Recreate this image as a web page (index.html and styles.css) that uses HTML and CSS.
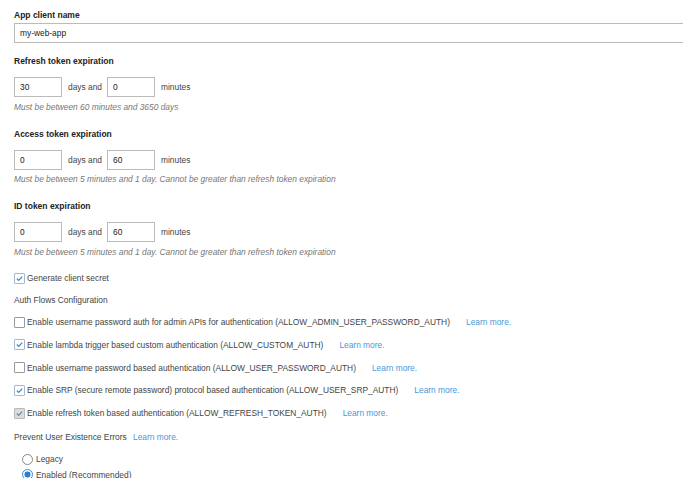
FILE: index.html
```html
<!DOCTYPE html>
<html>
<head>
<meta charset="utf-8">
<link rel="stylesheet" href="styles.css">
</head>
<body>
<form class="client-form">
  <section class="field name-field">
    <label class="field-label">App client name</label>
    <div class="text-input wide">my-web-app</div>
  </section>

  <section class="field">
    <label class="field-label">Refresh token expiration</label>
    <div class="duration">
      <div class="text-input short">30</div>
      <span class="unit">days and</span>
      <div class="text-input short">0</div>
      <span class="unit">minutes</span>
    </div>
    <p class="hint">Must be between 60 minutes and 3650 days</p>
  </section>

  <section class="field">
    <label class="field-label">Access token expiration</label>
    <div class="duration">
      <div class="text-input short">0</div>
      <span class="unit">days and</span>
      <div class="text-input short">60</div>
      <span class="unit">minutes</span>
    </div>
    <p class="hint">Must be between 5 minutes and 1 day. Cannot be greater than refresh token expiration</p>
  </section>

  <section class="field">
    <label class="field-label">ID token expiration</label>
    <div class="duration">
      <div class="text-input short">0</div>
      <span class="unit">days and</span>
      <div class="text-input short">60</div>
      <span class="unit">minutes</span>
    </div>
    <p class="hint">Must be between 5 minutes and 1 day. Cannot be greater than refresh token expiration</p>
  </section>

  <div class="check-row secret">
    <span class="box checked"><svg viewBox="0 0 11 11"><path d="M2.3 5.6 L4.5 7.8 L8.8 3.2"/></svg></span>
    <span>Generate client secret</span>
  </div>

  <div class="plain-label">Auth Flows Configuration</div>

  <div class="flows">
    <div class="check-row">
      <span class="box"></span>
      <span>Enable username password auth for admin APIs for authentication (ALLOW_ADMIN_USER_PASSWORD_AUTH)</span>
      <a class="learn">Learn more.</a>
    </div>
    <div class="check-row">
      <span class="box checked"><svg viewBox="0 0 11 11"><path d="M2.3 5.6 L4.5 7.8 L8.8 3.2"/></svg></span>
      <span>Enable lambda trigger based custom authentication (ALLOW_CUSTOM_AUTH)</span>
      <a class="learn">Learn more.</a>
    </div>
    <div class="check-row">
      <span class="box"></span>
      <span>Enable username password based authentication (ALLOW_USER_PASSWORD_AUTH)</span>
      <a class="learn">Learn more.</a>
    </div>
    <div class="check-row">
      <span class="box checked"><svg viewBox="0 0 11 11"><path d="M2.3 5.6 L4.5 7.8 L8.8 3.2"/></svg></span>
      <span>Enable SRP (secure remote password) protocol based authentication (ALLOW_USER_SRP_AUTH)</span>
      <a class="learn">Learn more.</a>
    </div>
    <div class="check-row">
      <span class="box checked locked"><svg viewBox="0 0 11 11"><path d="M2.3 5.6 L4.5 7.8 L8.8 3.2"/></svg></span>
      <span>Enable refresh token based authentication (ALLOW_REFRESH_TOKEN_AUTH)</span>
      <a class="learn">Learn more.</a>
    </div>
  </div>

  <div class="plain-label existence">Prevent User Existence Errors <a class="learn near">Learn more.</a></div>

  <div class="radios">
    <div class="radio-row"><span class="radio"></span><span>Legacy</span></div>
    <div class="radio-row"><span class="radio on"></span><span>Enabled (Recommended)</span></div>
  </div>
</form>
</body>
</html>
```

FILE: styles.css
```css
html, body {
  margin: 0;
  padding: 0;
  background: #fff;
}

body {
  font-family: "Liberation Sans", Arial, sans-serif;
  font-size: 8.4px;
  color: #444;
  overflow: hidden;
}

.client-form {
  padding: 10px 0 0 14px;
}

.field {
  margin-bottom: 16px;
}

.name-field {
  margin-bottom: 13px;
}

.field-label {
  display: block;
  font-weight: bold;
  color: #222;
  font-size: 8.5px;
  line-height: 11px;
  height: 11px;
  margin-bottom: 2px;
}

.text-input {
  box-sizing: border-box;
  height: 20px;
  border: 1px solid #bbb;
  padding: 0 0 0 5px;
  line-height: 18px;
  color: #222;
  background: #fff;
}

.text-input.wide {
  width: 700px;
}

.text-input.short {
  width: 48px;
}

.duration {
  display: flex;
  align-items: center;
  margin-top: 10px;
}

.unit {
  padding: 0 5px 0 6px;
  color: #444;
}

.hint {
  margin: 4.5px 0 0 0;
  font-style: italic;
  color: #777;
  line-height: 11px;
  height: 11px;
}

.check-row {
  display: flex;
  align-items: center;
  height: 11px;
  gap: 2px;
  white-space: nowrap;
}

.check-row.secret {
  margin-top: -1px;
}

.box {
  box-sizing: border-box;
  width: 11px;
  height: 11px;
  border: 1px solid #999;
  border-radius: 1px;
  background: #fff;
  display: inline-flex;
  flex: none;
}

.box svg {
  width: 100%;
  height: 100%;
}

.box svg path {
  fill: none;
  stroke: #3c8ad2;
  stroke-width: 1.6;
}

.box.checked {
  border-color: #aab8c6;
}

.box.locked {
  background: #dcdcdc;
  border-color: #b9b9b9;
}

.box.locked svg path {
  stroke: #6d87a3;
}

.learn {
  color: #4a98d8;
  margin-left: 14px;
}

.learn.near {
  margin-left: 4px;
}

.plain-label {
  margin-top: 11px;
  line-height: 11px;
  height: 11px;
}

.flows {
  display: flex;
  flex-direction: column;
  gap: 11.75px;
  margin-top: 11px;
}

.plain-label.existence {
  margin-top: 13px;
}

.radios {
  margin-top: 11px;
  padding-left: 8px;
  display: flex;
  flex-direction: column;
  gap: 4.5px;
}

.radio-row {
  display: flex;
  align-items: center;
  gap: 3px;
  height: 11px;
}

.radio {
  box-sizing: border-box;
  width: 11px;
  height: 11px;
  border-radius: 50%;
  border: 1px solid #888;
  background: #fff;
  flex: none;
}

.radio.on {
  border-color: #3c8ad2;
  background: radial-gradient(circle, #2b7fd0 0 2.8px, #fff 3.3px);
}
```
